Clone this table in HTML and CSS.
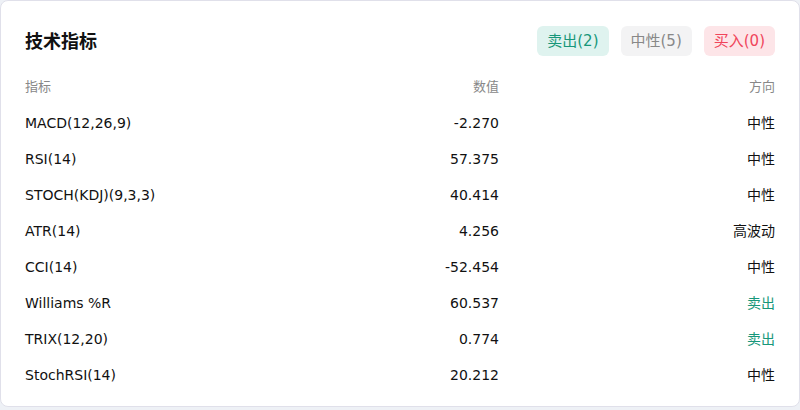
FILE: index.html
```html
<!DOCTYPE html>
<html>
<head>
    <title>技术指标</title>
    <link rel="stylesheet" href="styles.css">
</head>
<body>
    <div class="card">
        <div class="card-head">
            <h2>技术指标</h2>
            <div class="badges">
                <span class="badge sell">卖出(2)</span>
                <span class="badge neutral">中性(5)</span>
                <span class="badge buy">买入(0)</span>
            </div>
        </div>

        <div class="table">
            <div class="row head">
                <div>指标</div>
                <div class="num">数值</div>
                <div class="num">方向</div>
            </div>
            <div class="row">
                <div>MACD(12,26,9)</div>
                <div class="num">-2.270</div>
                <div class="num">中性</div>
            </div>
            <div class="row">
                <div>RSI(14)</div>
                <div class="num">57.375</div>
                <div class="num">中性</div>
            </div>
            <div class="row">
                <div>STOCH(KDJ)(9,3,3)</div>
                <div class="num">40.414</div>
                <div class="num">中性</div>
            </div>
            <div class="row">
                <div>ATR(14)</div>
                <div class="num">4.256</div>
                <div class="num">高波动</div>
            </div>
            <div class="row">
                <div>CCI(14)</div>
                <div class="num">-52.454</div>
                <div class="num">中性</div>
            </div>
            <div class="row">
                <div>Williams %R</div>
                <div class="num">60.537</div>
                <div class="num green">卖出</div>
            </div>
            <div class="row">
                <div>TRIX(12,20)</div>
                <div class="num">0.774</div>
                <div class="num green">卖出</div>
            </div>
            <div class="row">
                <div>StochRSI(14)</div>
                <div class="num">20.212</div>
                <div class="num">中性</div>
            </div>
        </div>
    </div>
</body>
</html>
```

FILE: styles.css
```css
body {
    font-family: "DejaVu Sans", "Noto Sans CJK SC", sans-serif;
    margin: 0;
    padding: 0;
    background-color: #eef1f6;
    color: #111;
}

.card {
    background-color: #fff;
    border: 1px solid #e0e0ea;
    border-radius: 8px;
    padding: 23px 24px 13px 24px;
    width: 750px;
}

.card-head {
    display: flex;
    align-items: center;
    justify-content: space-between;
    margin-bottom: 13px;
}

.card-head h2 {
    margin: 0;
    font-size: 18px;
    font-weight: bold;
}

.badges {
    display: flex;
    gap: 12px;
    margin-top: 2px;
}

.badge {
    font-size: 15px;
    line-height: 30px;
    padding: 0 10px;
    border-radius: 6px;
}

.badge.sell {
    background-color: #dff3ef;
    color: #17977a;
}

.badge.neutral {
    background-color: #f3f3f4;
    color: #888;
}

.badge.buy {
    background-color: #fde5e8;
    color: #f0455b;
}

.row {
    display: grid;
    grid-template-columns: 334px 140px 1fr;
    font-size: 14px;
    line-height: 36px;
}

.row.head {
    font-size: 13px;
    color: #888;
}

.num {
    text-align: right;
}

.green {
    color: #17977a;
}
```
